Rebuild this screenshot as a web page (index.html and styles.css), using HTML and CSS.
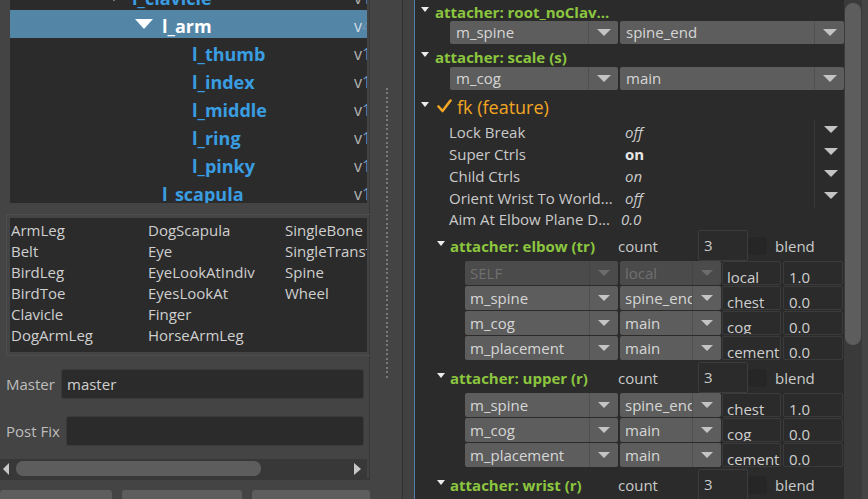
FILE: index.html
```html
<!DOCTYPE html>
<html>
<head>
<meta charset="utf-8">
<link rel="stylesheet" href="styles.css">
</head>
<body>
<div class="app">
  <div class="left">
    <div class="frame">
      <div class="tree">
        <div class="rows">
          <div class="row lvl0"><span class="slot"><span class="exp"></span></span><span class="name">l_clavicle</span><span class="ver">v<b>1</b></span></div>
          <div class="row lvl1 sel"><span class="slot"><span class="exp"></span></span><span class="name">l_arm</span><span class="ver">v<b>4</b></span></div>
          <div class="row lvl2"><span class="slot"></span><span class="name">l_thumb</span><span class="ver">v<b>1</b></span></div>
          <div class="row lvl2"><span class="slot"></span><span class="name">l_index</span><span class="ver">v<b>1</b></span></div>
          <div class="row lvl2"><span class="slot"></span><span class="name">l_middle</span><span class="ver">v<b>1</b></span></div>
          <div class="row lvl2"><span class="slot"></span><span class="name">l_ring</span><span class="ver">v<b>1</b></span></div>
          <div class="row lvl2"><span class="slot"></span><span class="name">l_pinky</span><span class="ver">v<b>1</b></span></div>
          <div class="row lvl1"><span class="slot"></span><span class="name">l_scapula</span><span class="ver">v<b>1</b></span></div>
        </div>
      </div>
      <div class="group">
        <div class="list">
          <span>ArmLeg</span><span>Belt</span><span>BirdLeg</span><span>BirdToe</span><span>Clavicle</span><span>DogArmLeg</span>
          <span>DogScapula</span><span>Eye</span><span>EyeLookAtIndiv</span><span>EyesLookAt</span><span>Finger</span><span>HorseArmLeg</span>
          <span>SingleBone</span><span>SingleTransform</span><span>Spine</span><span>Wheel</span>
        </div>
      </div>
      <div class="field f-master"><label>Master</label><div class="input">master</div></div>
      <div class="field f-post"><label>Post Fix</label><div class="input"></div></div>
      <div class="hscroll">
        <span class="harr l"></span>
        <span class="hthumb"></span>
        <span class="hspace"></span>
        <span class="harr r"></span>
      </div>
    </div>
    <div class="buttons">
      <div class="btn b1"></div><div class="btn b2"></div><div class="btn b3"></div>
    </div>
  </div>

  <div class="splitter"><div class="dots"></div></div>
  <div class="sep2"></div>

  <div class="right">
    <div class="content">
      <div class="hdr"><span class="tri"></span><span class="green">attacher: root_noClav...</span></div>
      <div class="ddrow">
        <div class="dd w168"><span class="v">m_spine</span><span class="arr"></span></div>
        <div class="dd w224"><span class="v">spine_end</span><span class="arr"></span></div>
      </div>
      <div class="hdr h2"><span class="tri"></span><span class="green">attacher: scale (s)</span></div>
      <div class="ddrow">
        <div class="dd w168"><span class="v">m_cog</span><span class="arr"></span></div>
        <div class="dd w224"><span class="v">main</span><span class="arr"></span></div>
      </div>
      <div class="fk"><span class="tri"></span>
        <svg class="check" width="15" height="14" viewBox="0 0 15 14"><path d="M1.5 7.5 L5.5 12 L13.5 1.5" fill="none" stroke="#f2a623" stroke-width="2.6" stroke-linecap="round" stroke-linejoin="round"/></svg>
        <span class="orange">fk (feature)</span></div>
      <div class="attrs">
        <div class="attr"><span class="lab">Lock Break</span><span class="val it">off</span><span class="acell"><span class="aarr"></span></span></div>
        <div class="attr"><span class="lab">Super Ctrls</span><span class="val bold">on</span><span class="acell"><span class="aarr"></span></span></div>
        <div class="attr"><span class="lab">Child Ctrls</span><span class="val it">on</span><span class="acell"><span class="aarr"></span></span></div>
        <div class="attr"><span class="lab">Orient Wrist To World...</span><span class="val it">off</span><span class="acell"><span class="aarr"></span></span></div>
        <div class="attr last"><span class="lab">Aim At Elbow Plane D...</span><span class="val it num">0.0</span></div>
      </div>

      <div class="ahdr"><span class="tri"></span><span class="aname green">attacher: elbow (tr)</span><span class="cnt">count</span><span class="box">3</span><span class="cb"></span><span class="blend">blend</span></div>
      <div class="grow dis"><div class="dd g1"><span class="v">SELF</span><span class="arr"></span></div><div class="dd g2"><span class="v">local</span><span class="arr"></span></div><div class="tf lbl"><span>local</span></div><div class="tf num"><span>1.0</span></div></div>
      <div class="grow"><div class="dd g1"><span class="v">m_spine</span><span class="arr"></span></div><div class="dd g2"><span class="v">spine_end</span><span class="arr"></span></div><div class="tf lbl"><span>chest</span></div><div class="tf num"><span>0.0</span></div></div>
      <div class="grow"><div class="dd g1"><span class="v">m_cog</span><span class="arr"></span></div><div class="dd g2"><span class="v">main</span><span class="arr"></span></div><div class="tf lbl"><span>cog</span></div><div class="tf num"><span>0.0</span></div></div>
      <div class="grow"><div class="dd g1"><span class="v">m_placement</span><span class="arr"></span></div><div class="dd g2"><span class="v">main</span><span class="arr"></span></div><div class="tf lbl"><span>cement</span></div><div class="tf num"><span>0.0</span></div></div>

      <div class="ahdr"><span class="tri"></span><span class="aname green">attacher: upper (r)</span><span class="cnt">count</span><span class="box">3</span><span class="cb"></span><span class="blend">blend</span></div>
      <div class="grow"><div class="dd g1"><span class="v">m_spine</span><span class="arr"></span></div><div class="dd g2"><span class="v">spine_end</span><span class="arr"></span></div><div class="tf lbl"><span>chest</span></div><div class="tf num"><span>1.0</span></div></div>
      <div class="grow"><div class="dd g1"><span class="v">m_cog</span><span class="arr"></span></div><div class="dd g2"><span class="v">main</span><span class="arr"></span></div><div class="tf lbl"><span>cog</span></div><div class="tf num"><span>0.0</span></div></div>
      <div class="grow"><div class="dd g1"><span class="v">m_placement</span><span class="arr"></span></div><div class="dd g2"><span class="v">main</span><span class="arr"></span></div><div class="tf lbl"><span>cement</span></div><div class="tf num"><span>0.0</span></div></div>

      <div class="ahdr"><span class="tri"></span><span class="aname green">attacher: wrist (r)</span><span class="cnt">count</span><span class="box">3</span><span class="cb"></span><span class="blend">blend</span></div>
    </div>
    <div class="vscroll"><div class="vthumb"></div></div>
    <div class="rframe"></div>
  </div>
</div>
</body>
</html>
```

FILE: styles.css
```css
* { box-sizing: border-box; }
html, body { margin: 0; padding: 0; }
body {
  width: 868px; height: 499px; overflow: hidden;
  background: #444444;
  font-family: "Open Sans", "Noto Sans", sans-serif;
  font-size: 15px;
  color: #cacaca;
}
.app { display: flex; height: 499px; }

/* ---------- left ---------- */
.left { width: 370px; flex: none; display: flex; flex-direction: column; }
.frame {
  height: 480px; width: 370px;
  border-right: 1px solid #383838;
  border-bottom: 2px solid #383838;
  display: flex; flex-direction: column;
}
.tree {
  margin-left: 10px; width: 357px; height: 203px;
  background: #2b2b2b; overflow: hidden;
}
.rows { margin-top: -18px; }
.row {
  display: flex; align-items: center; height: 28px;
  font-weight: 700; font-size: 18px; color: #3a9de2;
  white-space: nowrap;
}
.row.lvl0 { padding-left: 95px; }
.row.lvl1 { padding-left: 125px; }
.row.lvl2 { padding-left: 155px; }
.row.sel { background: #5285a6; color: #ffffff; }
.slot { width: 27px; flex: none; display: flex; align-items: center; }
.exp {
  width: 0; height: 0;
  border-left: 9.5px solid transparent; border-right: 9.5px solid transparent;
  border-top: 10px solid #ffffff;
}
.row.lvl0 .exp { border-top-color: #e0e0e0; }
.name { flex: 1; line-height: 28px; padding-top: 4px; }
.ver {
  width: 13px; flex: none; overflow: hidden; padding-top: 3px;
  font-weight: 400; font-size: 16px; color: #b4b4b4;
}
.ver b { font-weight: 400; color: #6f93b3; }
.row.sel .ver { color: #d2dde6; }

.group {
  margin: 11px 0 0 6px; width: 364px;
  border: 1px solid #4e4e4e; border-right: none;
  padding: 3px 0 3px 3px;
}
.list {
  width: 357px; height: 134px; background: #2b2b2b; overflow: hidden;
  display: grid; grid-auto-flow: column;
  grid-template-rows: repeat(6, 21px); grid-template-columns: repeat(3, 137px);
  padding: 2px 0 0 1px;
  color: #cfcfcf; white-space: nowrap;
}
.list span { line-height: 21px; overflow: hidden; }

.field { display: flex; align-items: center; height: 30px; padding-left: 6px; padding-right: 5px; }
.f-master { margin-top: 13px; }
.f-post { margin-top: 17px; }
.field label { color: #bdbdbd; margin-right: 6px; white-space: nowrap; }
.f-master label { width: 49px; }
.f-post label { width: 54px; }
.input {
  flex: 1; height: 30px; background: #2b2b2b;
  border: 1px solid #3a3a3a; border-radius: 3px;
  padding-left: 5px; line-height: 28px; color: #d0d0d0;
}

.hscroll {
  margin-top: 13px; width: 367px; height: 19px;
  background: #383838; display: flex; align-items: center;
}
.harr { width: 0; height: 0; border-top: 6px solid transparent; border-bottom: 6px solid transparent; }
.harr.l { border-right: 6px solid #c8c8c8; margin-left: 3px; margin-right: 7px; }
.harr.r { border-left: 7px solid #c8c8c8; margin-right: 6px; }
.hthumb { width: 245px; height: 15px; background: #5d5d5d; border-radius: 7px; }
.hspace { flex: 1; }

.buttons { display: flex; gap: 10px; margin-top: 10px; }
.btn { height: 20px; background: #5d5d5d; border-radius: 3px 3px 0 0; }
.b1 { width: 112px; } .b2 { width: 120px; } .b3 { width: 118px; }

/* ---------- splitter ---------- */
.splitter { width: 32px; flex: none; display: flex; justify-content: center; padding-left: 1px; }
.dots {
  margin-top: 88px; width: 2px; height: 290px;
  background: repeating-linear-gradient(to bottom, #7a7a7a 0 2px, transparent 2px 4.5px);
}
.sep2 {
  width: 13px; flex: none; background: #414141;
  border-left: 1px solid #2f2f2f; border-right: 1px solid #4f7fa6;
}

/* ---------- right ---------- */
.right { flex: 1; display: flex; background: #2b2b2b; }
.content { width: 429px; flex: none; overflow: hidden; }
.vscroll { width: 18px; flex: none; background: #3a3a3a; padding: 3px 0 0 1px; }
.vthumb { width: 16px; height: 342px; background: #5d5d5d; border-radius: 8px; }
.rframe { width: 6px; flex: none; background: #444444; }

.tri {
  width: 0; height: 0; flex: none;
  border-left: 4px solid transparent; border-right: 4px solid transparent;
  border-top: 5px solid #ececec;
}
.green { color: #8cc63f; font-weight: 700; white-space: nowrap; }
.orange { color: #f2a623; font-size: 18px; }

.hdr { display: flex; align-items: center; height: 21px; padding-left: 6px; padding-top: 2px; }
.hdr .tri { margin-right: 6px; margin-top: -4px; }
.hdr.h2 { height: 23px; }
.ddrow { display: flex; gap: 2px; padding-left: 35px; height: 23px; }
.w168 { width: 168px; }
.w224 { width: 224px; }

.dd {
  display: flex; background: #5d5d5d; border-radius: 2px;
  color: #d6d6d6; white-space: nowrap; overflow: hidden;
}
.dd .v { flex: 1; padding-left: 6px; overflow: hidden; line-height: 23px; }
.dd .arr {
  width: 30px; flex: none; border-left: 1px solid #505050;
  display: flex; align-items: center; justify-content: center;
}
.dd .arr::after {
  content: ""; width: 0; height: 0;
  border-left: 7px solid transparent; border-right: 7px solid transparent;
  border-top: 7px solid #c4c4c4;
}

.fk { display: flex; align-items: center; height: 30px; padding-left: 6px; padding-top: 3px; }
.fk .tri { margin-right: 8px; margin-top: -4px; }
.check { margin-right: 5px; margin-top: -2px; }

.attr { display: flex; align-items: center; height: 22px; padding-left: 34px; white-space: nowrap; }
.attr.last { height: 21px; }
.lab { width: 176px; flex: none; padding-top: 1px; }
.val { flex: 1; padding-top: 1px; }
.val.it { font-style: italic; }
.val.bold { font-weight: 700; color: #e6e6e6; }
.val.num { margin-left: -4px; }
.acell {
  width: 30px; height: 22px; flex: none; border-left: 1px solid #383838;
  display: flex; align-items: center; justify-content: center; padding-left: 2px; padding-bottom: 3px;
}
.aarr {
  width: 0; height: 0;
  border-left: 7px solid transparent; border-right: 7px solid transparent;
  border-top: 7px solid #c4c4c4;
}

.ahdr { display: flex; align-items: center; height: 32px; padding-left: 22px; padding-top: 1px; white-space: nowrap; }
.ahdr .tri { margin-right: 5px; margin-top: -5px; }
.aname { width: 168px; flex: none; }
.cnt { width: 80px; flex: none; }
.box {
  width: 50px; height: 31px; flex: none; margin-top: -1px;
  border: 1px solid #3c3c3c; border-radius: 2px;
  padding-left: 5px; line-height: 29px;
}
.cb { width: 19px; height: 18px; flex: none; background: #262626; border-radius: 4px; }
.blend { margin-left: 8px; }

.grow { display: flex; height: 24px; margin-bottom: 1px; padding-left: 50px; }
.g1 { width: 153px; }
.g2 { width: 101px; margin-left: 2px; }
.grow .dd .v { line-height: 24px; padding-left: 5px; }
.grow .dd .arr { width: 29px; }
.grow .dd .arr::after { border-left-width: 6px; border-right-width: 6px; border-top-width: 6px; }
.grow.dis .dd { background: #4b4b4b; color: #707070; }
.grow.dis .dd .arr { border-left-color: #444; }
.grow.dis .dd .arr::after { border-top-color: #6c6c6c; }
.tf {
  height: 24px; background: #2b2b2b; border: 1px solid #3b3b3b; border-radius: 2px;
  overflow: hidden; padding: 5px 0 0 4px; line-height: 20px; color: #cfcfcf; white-space: nowrap;
}
.tf.lbl { width: 59px; margin-left: 1px; }
.tf.num { width: 60px; margin-left: 2px; padding-left: 5px; }
```
